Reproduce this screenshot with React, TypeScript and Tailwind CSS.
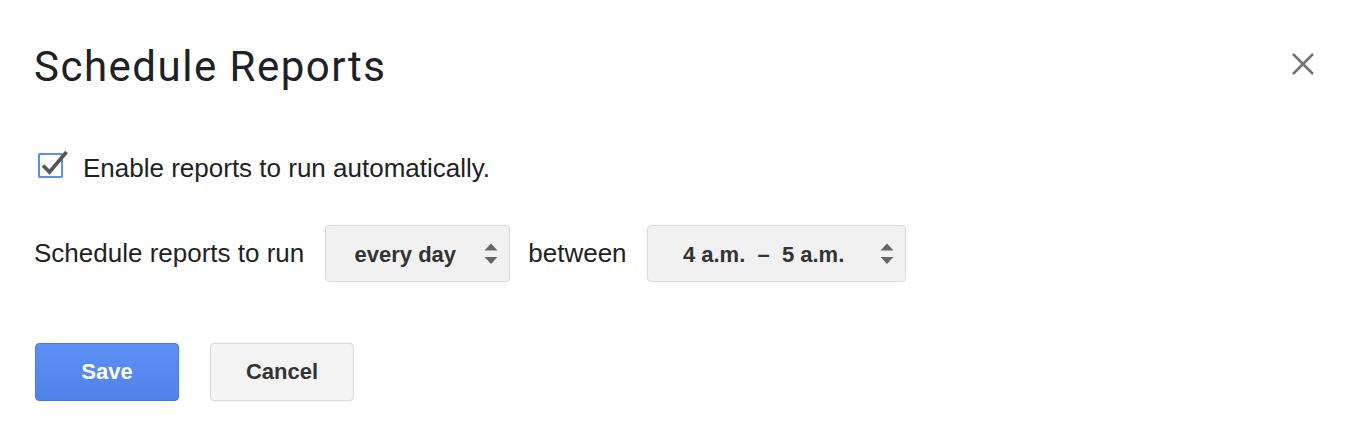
import { useState } from "react"

function Arrows() {
  return (
    <svg width="14" height="22" viewBox="0 0 14 22" className="shrink-0">
      <path d="M7 0.5 L13.5 7.5 L0.5 7.5 Z" fill="#666" />
      <path d="M0.5 14 L13.5 14 L7 21 Z" fill="#666" />
    </svg>
  )
}

function Select({ value, width }: { value: string; width: string }) {
  return (
    <button
      className={`${width} h-[57px] flex items-center pr-[11px] rounded-[4px] border border-[#dadada] bg-[#f1f1f1] text-[#333] font-bold text-[22px] leading-[24px]`}
    >
      <span className="flex-1 text-center pt-[2px] whitespace-pre">{value}</span>
      <Arrows />
    </button>
  )
}

export default function App() {
  const [enabled, setEnabled] = useState(true)

  return (
    <div className="w-[1370px] h-[428px] bg-white px-[34px] pt-[46px] font-['Liberation_Sans',Arial,sans-serif] text-[#222]">
      <div className="flex items-start justify-between pr-[22px]">
        <h1 className="font-['Roboto',sans-serif] text-[42px] leading-[42px] tracking-[1.5px] text-[#202124] font-normal">
          Schedule Reports
        </h1>
        <svg width="22" height="22" viewBox="0 0 22 22" className="mt-[7px]">
          <path d="M1 1 L21 21 M21 1 L1 21" stroke="#737373" strokeWidth="2.6" />
        </svg>
      </div>

      <div className="mt-[59px] flex items-start">
        <svg
          width="34"
          height="34"
          viewBox="0 0 34 34"
          className="ml-[2px] cursor-pointer"
          onClick={() => setEnabled(!enabled)}
        >
          <rect x="3" y="7" width="23" height="23" fill="white" stroke="#5b8ff0" strokeWidth="2" rx="0.5" />
          {enabled && (
            <path d="M7 18.5 L13.5 25 L30.5 5" fill="none" stroke="#555" strokeWidth="3.6" />
          )}
        </svg>
        <span className="ml-[13px] mt-[6px] text-[26px] leading-[30px]">Enable reports to run automatically.</span>
      </div>

      <div className="mt-[42px] flex items-start">
        <span className="mt-[13px] text-[26px] leading-[30px]">Schedule reports to run</span>
        <div className="ml-[21px]">
          <Select value="every day" width="w-[185px]" />
        </div>
        <span className="ml-[18px] mt-[13px] text-[26px] leading-[30px]">between</span>
        <div className="ml-[20px]">
          <Select value={"4 a.m.  \u2013  5 a.m."} width="w-[259px]" />
        </div>
      </div>

      <div className="mt-[61px] flex items-start gap-[31px] pl-[1px]">
        <button className="w-[144px] h-[58px] rounded-[4px] border border-[#4479e6] bg-gradient-to-b from-[#5d91f6] to-[#4f83ea] text-white font-bold text-[22px] leading-[24px]">
          Save
        </button>
        <button className="w-[144px] h-[58px] rounded-[4px] border border-[#dadada] bg-[#f3f3f3] text-[#333] font-bold text-[22px] leading-[24px]">
          Cancel
        </button>
      </div>
    </div>
  )
}
